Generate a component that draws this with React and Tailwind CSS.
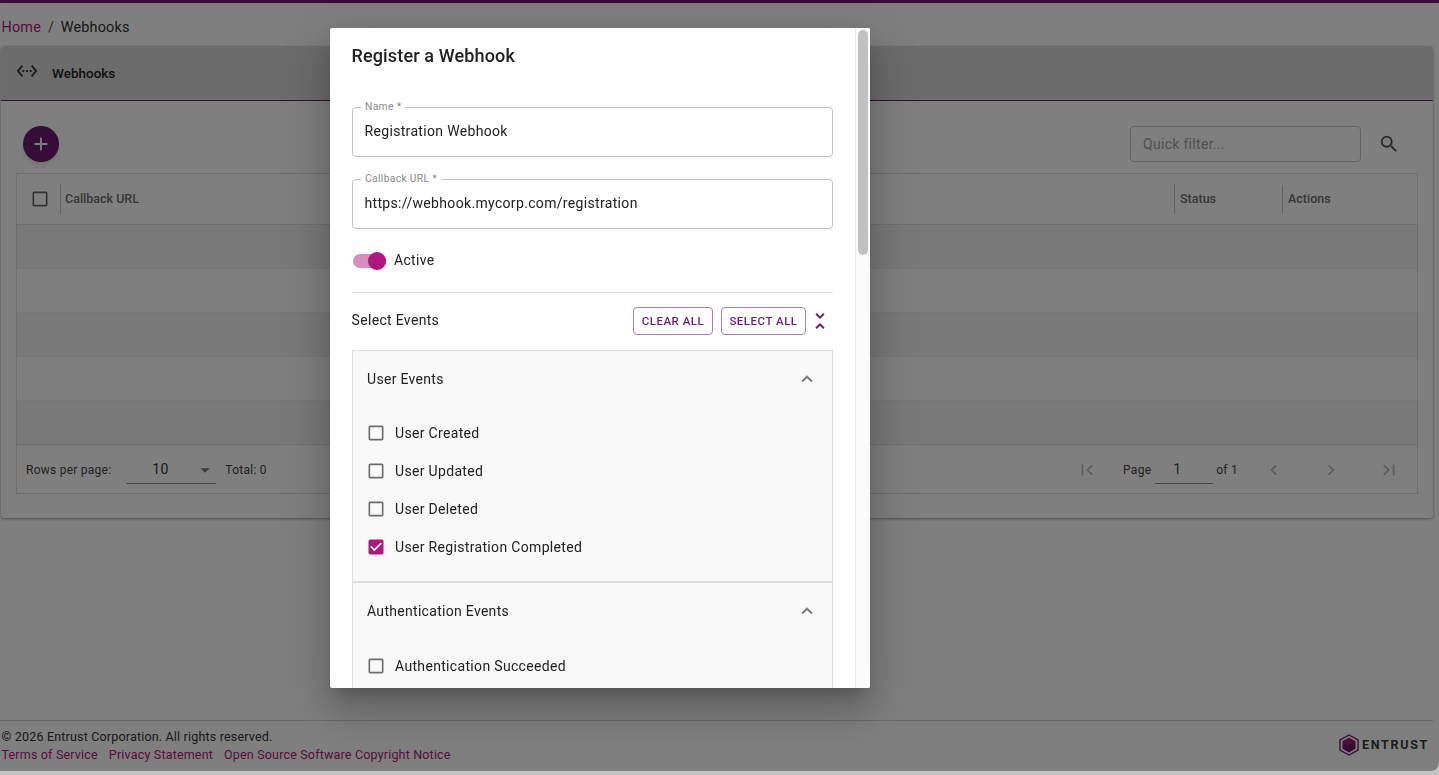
import {
  MdAdd,
  MdArrowDropDown,
  MdCheckBox,
  MdCheckBoxOutlineBlank,
  MdChevronLeft,
  MdChevronRight,
  MdExpandLess,
  MdFirstPage,
  MdLastPage,
  MdSearch,
  MdSettingsEthernet,
  MdUnfoldLess,
} from "react-icons/md";

const Logo = () => (
  <div className="flex items-center gap-[3px]">
    <svg width="20" height="22" viewBox="0 0 20 22">
      <defs>
        <linearGradient id="hexfill" x1="0" y1="0" x2="0" y2="1">
          <stop offset="0" stopColor="#c8147c" />
          <stop offset="1" stopColor="#5a1a78" />
        </linearGradient>
      </defs>
      <path d="M10 1 L19 6 V16 L10 21 L1 16 V6 Z" fill="none" stroke="#6b1d78" strokeWidth="1.4" />
      <path d="M10 3.5 L16.5 7.2 V14.8 L10 18.5 L3.5 14.8 V7.2 Z" fill="url(#hexfill)" />
      <path d="M10.5 11 L16 8 M10.5 13.5 L16 10.5 M10.5 16 L16 13" stroke="#2a2a2a" strokeWidth="1" />
    </svg>
    <span className="text-[12.5px] leading-none font-bold tracking-[1.7px] text-[#3a3a3a]">ENTRUST</span>
  </div>
);

const Field = ({ label, value }) => (
  <div className="relative h-[50px] rounded border border-[#c4c4c4] flex items-center pl-[11.5px] pb-[1px] text-[14px] tracking-[0.33px] text-[#212121]">
    <span className="absolute -top-[8px] left-[8px] bg-white px-1 text-[10.3px] leading-[14px] text-[#8a8a8a]">
      {label}
    </span>
    {value}
  </div>
);

const EventRow = ({ label, checked }) => (
  <div className="h-[38px] flex items-center gap-[9px]">
    {checked ? (
      <MdCheckBox className="text-[#b0177c]" size={20} />
    ) : (
      <MdCheckBoxOutlineBlank className="text-[#6e6e6e]" size={20} />
    )}
    <span className="text-[14px] tracking-[0.33px] text-[#212121]">{label}</span>
  </div>
);

const AccordionHead = ({ title }) => (
  <div className="h-[56px] flex items-center justify-between pl-[14px] pr-[14px]">
    <span className="text-[14px] tracking-[0.3px] text-[#212121]">{title}</span>
    <MdExpandLess className="text-[#777]" size={22} />
  </div>
);

const Modal = () => (
  <div className="fixed left-[330px] top-[28px] w-[540px] h-[660px] bg-white rounded-[2px] shadow-[0_11px_15px_-7px_rgba(0,0,0,0.2),0_24px_38px_3px_rgba(0,0,0,0.14),0_9px_46px_8px_rgba(0,0,0,0.12)] flex overflow-hidden">
    <div className="flex-1 min-w-0 pl-[22px] pr-[22px] overflow-hidden">
      <h2 className="h-[55px] -ml-[0.5px] flex items-center text-[18px] font-medium tracking-[0.15px] text-[#212121]">
        Register a Webhook
      </h2>
      <div className="mt-[24px] flex flex-col gap-[22px]">
        <Field label="Name *" value="Registration Webhook" />
        <Field label="Callback URL *" value="https://webhook.mycorp.com/registration" />
      </div>
      <div className="mt-[10px] h-[42px] pt-[1px] flex items-center gap-[8px]">
        <div className="relative ml-[1px] w-[33px] h-[14px] rounded-full bg-[#dd8bbd]">
          <div className="absolute right-0 -top-[2px] w-[18px] h-[18px] rounded-full bg-[#b0177c] shadow" />
        </div>
        <span className="text-[14px] tracking-[0.3px] text-[#212121]">Active</span>
      </div>
      <div className="mt-[11px] border-t border-[#e0e0e0] h-[57px] flex items-center justify-between">
        <span className="text-[14px] tracking-[0.33px] -ml-[0.5px] -mt-[2px] text-[#212121]">Select Events</span>
        <div className="flex items-center gap-2">
          <button className="h-[28px] w-[80px] pt-[1px] rounded border border-[#b07fb8] text-[11.5px] font-medium tracking-[0.5px] text-[#6b1d78]">
            CLEAR ALL
          </button>
          <button className="h-[28px] w-[85px] pt-[1px] rounded border border-[#b07fb8] text-[11.5px] font-medium tracking-[0.5px] text-[#6b1d78]">
            SELECT ALL
          </button>
          <MdUnfoldLess className="text-[#6b1d78] -ml-[6px] mr-[1px]" size={24} />
        </div>
      </div>
      <div className="mt-[1px] border border-[#dedede] bg-[#f9f9f9]">
        <AccordionHead title="User Events" />
        <div className="pl-[13px] pt-[7px] pb-[15px]">
          <EventRow label="User Created" />
          <EventRow label="User Updated" />
          <EventRow label="User Deleted" />
          <EventRow label="User Registration Completed" checked />
        </div>
        <div className="border-t-2 border-[#dedede]">
          <AccordionHead title="Authentication Events" />
          <div className="pl-[13px] pt-[8px] pb-[24px]">
            <EventRow label="Authentication Succeeded" />
          </div>
        </div>
      </div>
    </div>
    <div className="w-[15px] shrink-0 bg-[#fafafa] border-l border-[#e8e8e8] pt-[2px] px-[2px]">
      <div className="h-[225px] rounded-full bg-[#c1c1c1]" />
    </div>
  </div>
);

const App = () => {
  return (
    <div className="h-screen overflow-hidden bg-[#c4c4c4] font-['Roboto',sans-serif]">
      <div className="relative h-[771px] overflow-hidden rounded-br-lg bg-white flex flex-col">
        <div className="h-[3px] shrink-0 bg-[#6b1b70] shadow-md" />
        <div className="h-[43px] shrink-0 flex items-center pl-[1.5px] pt-[7px] text-[14.4px] tracking-[0.2px]">
          <span className="text-[#b0177c]">Home</span>
          <span className="mx-[7px] text-[#555]">/</span>
          <span className="text-[#333] -ml-[0.5px]">Webhooks</span>
        </div>

        <div className="mx-[1px] mr-[6px] h-[472px] shrink-0 rounded bg-white shadow-[0_1px_3px_rgba(0,0,0,0.4)] flex flex-col">
          <div className="h-[55px] shrink-0 rounded-t bg-[#d8d8d8] border-b border-[#6b1b70] flex items-center pl-[15px] gap-[14px]">
            <MdSettingsEthernet className="text-[#333] -mt-[4px]" size={22} />
            <span className="text-[13.5px] mt-[1px] font-medium text-[#222]">Webhooks</span>
          </div>

          <div className="h-[72px] shrink-0 flex items-center justify-between pl-[22px] pr-[33px] pt-[14px]">
            <div className="w-[36px] h-[36px] rounded-full bg-[#6b1b70] shadow-md flex items-center justify-center">
              <MdAdd className="text-white" size={22} />
            </div>
            <div className="flex items-center gap-[17px]">
              <div className="w-[231px] h-[36px] rounded border border-[#c4c4c4] flex items-center px-3 text-[14px] tracking-[0.3px] text-[#9e9e9e]">
                Quick filter...
              </div>
              <MdSearch className="text-[#555]" size={22} />
            </div>
          </div>

          <div className="mx-[15px] h-[321px] shrink-0 border border-[#dcdcdc] flex flex-col">
            <div className="h-[51px] shrink-0 flex items-center border-b border-[#dcdcdc] text-[12.5px] font-medium text-[#6e6e6e]">
              <MdCheckBoxOutlineBlank className="ml-[13px] text-[#666]" size={20} />
              <div className="ml-[10px] h-[30px] border-l border-[#c4c4c4] pl-[4px] flex items-center">Callback URL</div>
              <div className="ml-auto h-[30px] w-[108px] border-l border-[#c4c4c4] pl-[5px] flex items-center">Status</div>
              <div className="h-[28px] w-[135px] border-l border-[#c4c4c4] pl-[5px] flex items-center">Actions</div>
            </div>
            <div className="h-[44px] bg-[#f2f2f2] border-b border-[#ececec]" />
            <div className="h-[44px] border-b border-[#ececec]" />
            <div className="h-[44px] bg-[#f2f2f2] border-b border-[#ececec]" />
            <div className="h-[44px] border-b border-[#ececec]" />
            <div className="h-[44px] bg-[#f2f2f2] border-b border-[#dcdcdc]" />
            <div className="flex-1 flex items-center pl-[9px] pr-[17px] pt-[2px] text-[12px] tracking-[0.25px] text-[#444]">
              <span>Rows per page:</span>
              <div className="ml-[15px] w-[90px] h-[28px] border-b border-[#8a8a8a] flex items-center justify-between pl-[26px] text-[14px] text-[#333]">
                10
                <MdArrowDropDown className="text-[#777]" size={22} />
              </div>
              <span className="ml-[9px]">Total: 0</span>
              <div className="ml-auto flex items-center text-[#bbb]">
                <MdFirstPage size={22} />
                <span className="ml-[25px] mr-[1px] text-[#444]">Page</span>
                <div className="ml-[3px] w-[58px] h-[27px] border-b border-[#8a8a8a] pl-[18px] flex items-center text-[14px] text-[#444]">1</div>
                <span className="ml-[3px] text-[#444]">of 1</span>
                <MdChevronLeft className="ml-[25px]" size={22} />
                <MdChevronRight className="ml-[35px]" size={22} />
                <MdLastPage className="ml-[36px]" size={22} />
              </div>
            </div>
          </div>
        </div>

        <div className="mt-auto h-[51px] shrink-0 mr-[6px] border-t border-[#d0d0d0] flex justify-between pl-[1.5px] pr-[4px] pt-[7px] text-[12.5px] tracking-[0.18px]">
          <div>
            <div className="leading-[18px] text-[#333]">© 2026 Entrust Corporation. All rights reserved.</div>
            <div className="leading-[18px] flex gap-[11px] text-[#b0177c]">
              <span>Terms of Service</span>
              <span>Privacy Statement</span>
              <span>Open Source Software Copyright Notice</span>
            </div>
          </div>
          <div className="pt-[6px]">
            <Logo />
          </div>
        </div>

        <div className="absolute inset-0 bg-black/50" />
      </div>
      <Modal />
    </div>
  );
};

export default App;
